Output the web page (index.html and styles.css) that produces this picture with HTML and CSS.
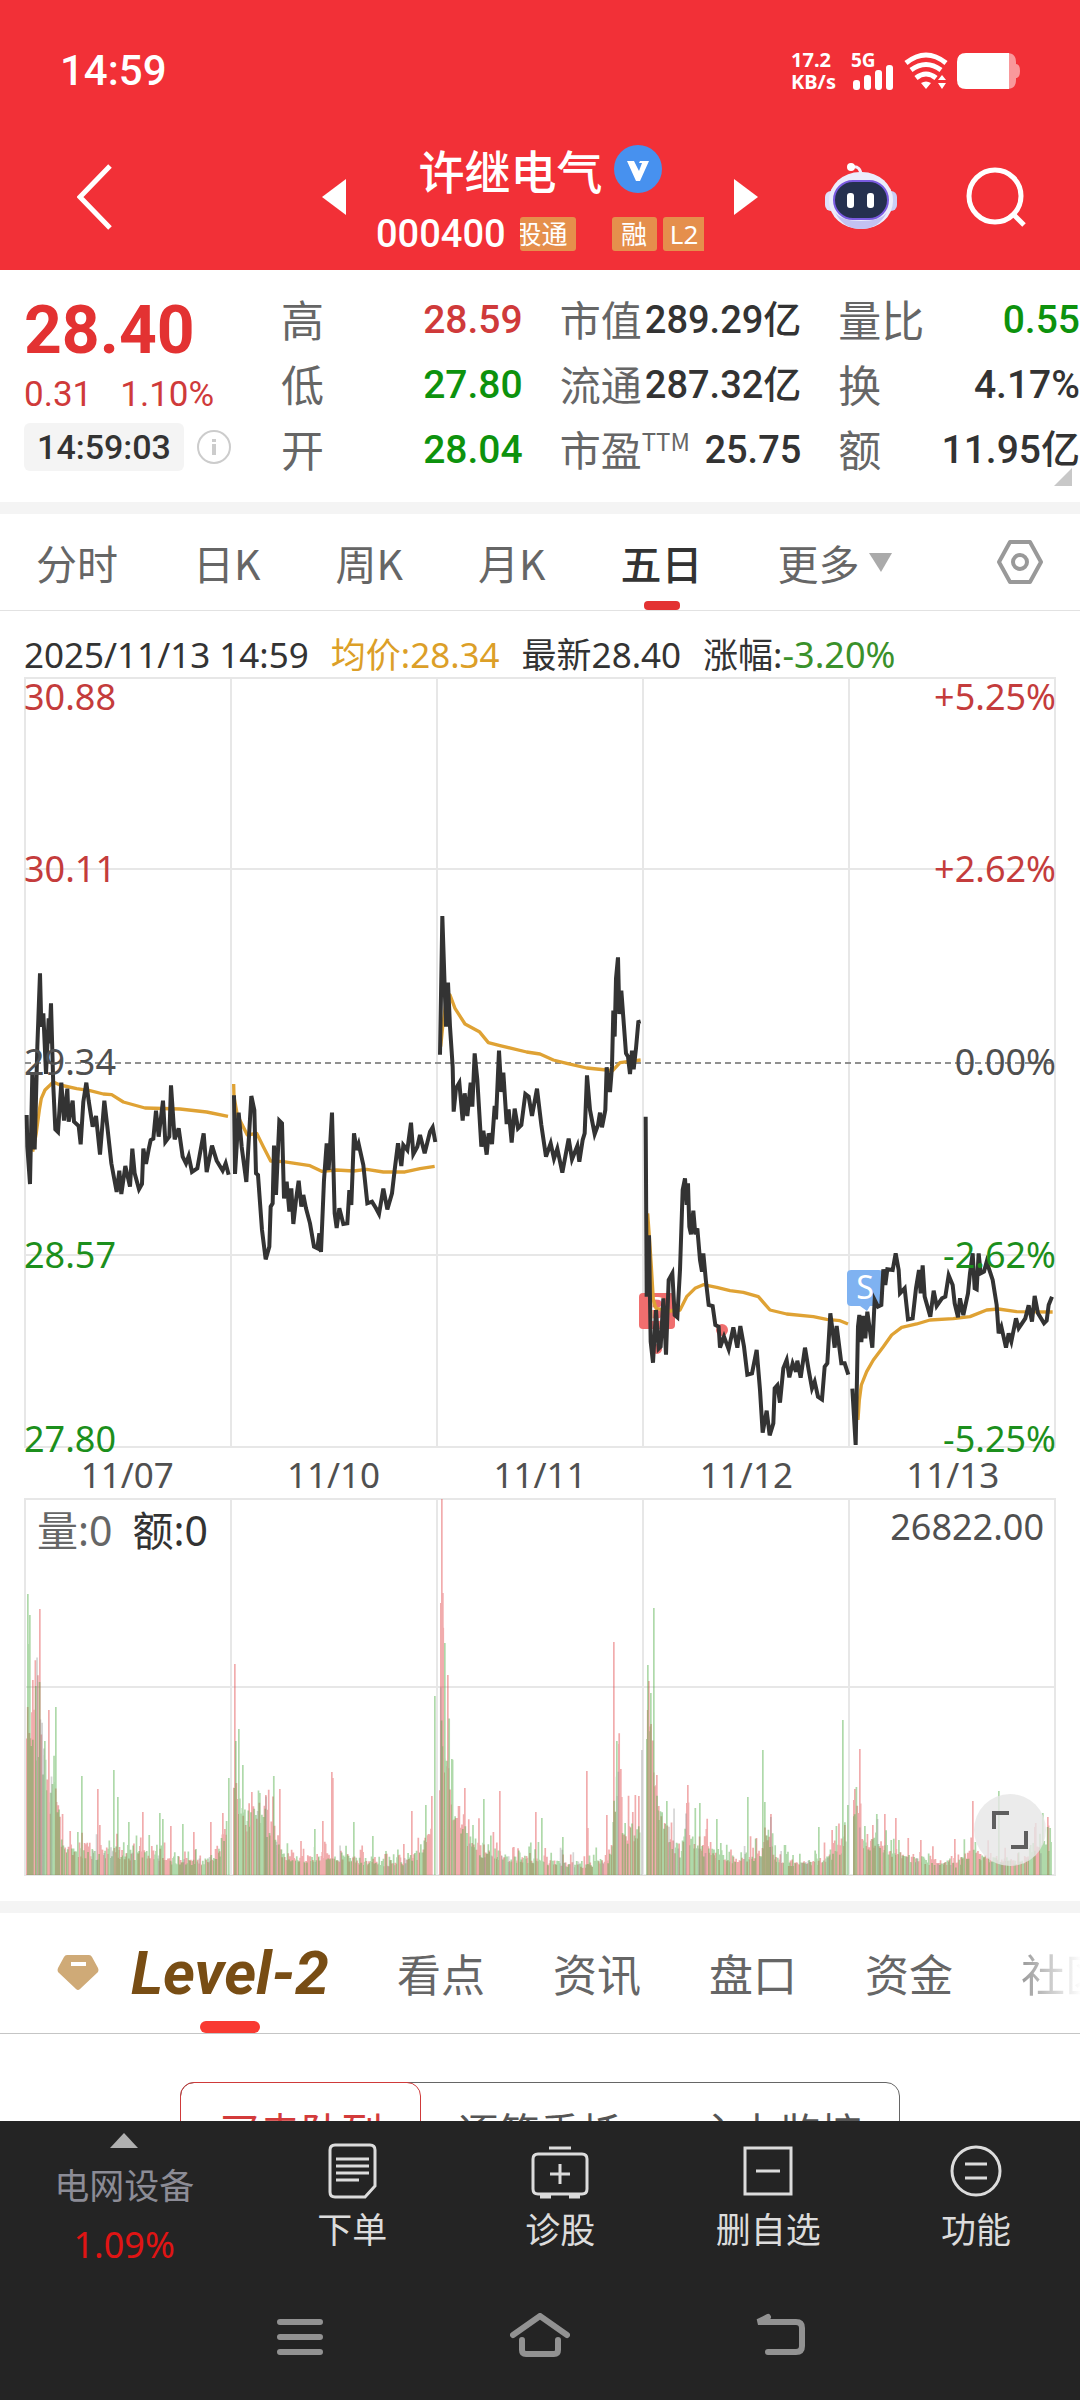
FILE: index.html
```html
<!DOCTYPE html>
<html lang="zh-CN">
<head>
<meta charset="utf-8">
<meta name="viewport" content="width=device-width, initial-scale=1">
<title>许继电气 000400</title>
<link rel="stylesheet" href="styles.css">
</head>
<body>
<div class="app">
  <header class="header">
    <div class="status">
      <span class="clock">14:59</span>
      <div class="status-icons">
        <span class="speed">17.2<br>KB/s</span>
        <div class="signal">
          <span>5G</span>
          <svg width="40" height="25" viewBox="0 0 40 25" fill="#fff"><rect x="0" y="15" width="7" height="10" rx="3"/><rect x="11" y="10" width="7" height="15" rx="3"/><rect x="22" y="5" width="7" height="20" rx="3"/><rect x="33" y="0" width="7" height="25" rx="3"/></svg>
        </div>
        <svg class="wifi" width="44" height="38" viewBox="0 0 44 38" fill="none" stroke="#fff" stroke-width="5"><path d="M2 11Q22-5 42 11M7 18Q22 7 37 18M12 26Q22 18 32 26"/><path d="M17 31q5-3 10 0l-5 6zM34 28l4-5 4 5zM34 31h8l-4 6z" fill="#fff" stroke="none"/></svg>
        <svg class="battery" width="63" height="36" viewBox="0 0 63 36"><path d="M50 0c7 0 9 4 9 9v2q4 0 4 7t-4 7v2c0 5-2 9-9 9z" fill="#f9989b"/><path d="M9 0h43v36H9q-9 0-9-9V9q0-9 9-9z" fill="#fff"/></svg>
      </div>
    </div>
    <nav class="titlebar">
      <div class="side">
        <button class="icon-btn" aria-label="返回"><svg width="36" height="66" viewBox="0 0 36 66" fill="none" stroke="#fff" stroke-width="5"><path d="M33 2L3 33l30 31"/></svg></button>
      </div>
      <div class="stock">
        <button class="icon-btn" aria-label="上一只"><svg width="24" height="36" viewBox="0 0 24 36" fill="#fff"><path d="M24 0v36L0 18z"/></svg></button>
        <div class="stock-name">
          <h1>许继电气<svg width="48" height="48" viewBox="0 0 48 48"><circle cx="24" cy="24" r="24" fill="#4791ef"/><path d="M13 16h7l5 10 3-8h-3l1-2h9l-9 20h-4z" fill="#fff"/></svg></h1>
          <div class="code-row">
            <span class="code">000400</span>
            <span class="tag tag-cut">股通</span>
            <span class="tag">融</span>
            <span class="tag tag-l2">L2</span>
          </div>
        </div>
        <button class="icon-btn" aria-label="下一只"><svg width="24" height="36" viewBox="0 0 24 36" fill="#fff"><path d="M0 0v36l24-18z"/></svg></button>
      </div>
      <div class="side side-right">
        <button class="icon-btn" aria-label="智能助手"><svg width="72" height="70" viewBox="0 0 72 70"><path d="M36 14c0-7-3-10-9-9" fill="none" stroke="#f3eefc" stroke-width="3"/><circle cx="26" cy="5" r="4" fill="#fff"/><rect x="0" y="29" width="14" height="20" rx="6" fill="#dfe0fa"/><rect x="58" y="29" width="14" height="20" rx="6" fill="#c9cdf5"/><rect x="4" y="10" width="64" height="57" rx="31" ry="28" fill="#ececfb"/><path d="M10 50q8 17 26 17t26-17q-6 9-26 9T10 50z" fill="#c3c2f2"/><rect x="9" y="19" width="54" height="38" rx="19" fill="#25304f" stroke="#7a5be0" stroke-width="2"/><rect x="22" y="31" width="7" height="15" rx="3" fill="#fff"/><rect x="42" y="31" width="7" height="15" rx="3" fill="#fff"/></svg></button>
        <button class="icon-btn" aria-label="搜索"><svg width="62" height="62" viewBox="0 0 62 62" fill="none" stroke="#fff" stroke-width="5"><circle cx="30" cy="30" r="26"/><path d="M48 48l11 11"/></svg></button>
      </div>
    </nav>
  </header>

  <main class="content">
    <section class="quote">
      <div class="quote-main">
        <strong class="price">28.40</strong>
        <div class="change"><span>0.31</span><span>1.10%</span></div>
        <div class="quote-time"><time>14:59:03</time><svg width="34" height="34" viewBox="0 0 34 34" fill="none" stroke="#ccc" stroke-width="2"><circle cx="17" cy="17" r="16"/><path d="M17 14v11M17 9v3" stroke-width="4"/></svg></div>
      </div>
      <dl class="stats">
        <div><dt>高</dt><dd class="up">28.59</dd></div>
        <div><dt>低</dt><dd class="down">27.80</dd></div>
        <div><dt>开</dt><dd class="down">28.04</dd></div>
      </dl>
      <dl class="stats stats-tight">
        <div><dt>市值</dt><dd>289.29亿</dd></div>
        <div><dt>流通</dt><dd>287.32亿</dd></div>
        <div><dt>市盈<sup>TTM</sup></dt><dd>25.75</dd></div>
      </dl>
      <dl class="stats">
        <div><dt>量比</dt><dd class="down">0.55</dd></div>
        <div><dt>换</dt><dd>4.17%</dd></div>
        <div><dt>额</dt><dd>11.95亿</dd></div>
      </dl>
      <svg class="corner" width="18" height="18" viewBox="0 0 18 18" fill="#c8c8c8"><path d="M18 0v18H0z"/></svg>
    </section>

    <nav class="periods">
      <a href="#">分时</a><a href="#">日K</a><a href="#">周K</a><a href="#">月K</a><a href="#" class="active">五日</a>
      <a href="#" class="more">更多<svg width="23" height="19" viewBox="0 0 23 19" fill="#aaa"><path d="M0 0h23L12 19z"/></svg></a>
      <button class="icon-btn settings" aria-label="设置"><svg width="48" height="46" viewBox="0 0 48 46" fill="none" stroke="#999" stroke-width="4"><path d="M14 3h20l11 20-11 20H14L3 23z" stroke-linejoin="round"/><circle cx="24" cy="23" r="7"/></svg></button>
    </nav>

    <section class="chart">
      <div class="legend">
        <span>2025/11/13 14:59</span><span class="avg">均价:28.34</span><span>最新28.40</span><span>涨幅:<b>-3.20%</b></span>
      </div>
      <div class="plot">
        <svg viewBox="24 677 1032 771" role="img" aria-label="五日走势">
          <path d="M25 678h1030v769H25zM25 869h1030M25 1255h1030M231 678v769M437 678v769M643 678v769M849 678v769" class="grid"/>
          <path d="M25 1063h1030" class="dash"/>
          <g class="buy"><rect x="639" y="1293" width="36" height="36" rx="4"/><circle cx="657" cy="1349" r="5"/><circle cx="722" cy="1330" r="6"/></g>
          <g class="sell"><path d="M851 1270h28q4 0 4 4v28q0 4-4 4h-9l-3 5-7-5h-9q-4 0-4-4v-28q0-4 4-4z"/><circle cx="868" cy="1327" r="4"/></g>
          <text x="657" y="1321" class="flag">B</text><text x="865" y="1299" class="flag">S</text>
          <g transform="translate(0 880) scale(.33333)">
            <polyline class="mean" points="98,815 108,765 118,690 124,655 135,630 160,606 180,615 230,626 270,632 310,642 335,644 370,666 435,684 540,687 620,696 684,709"/>
            <polyline class="mean" points="701,612 702,650 712,705 722,725 742,765 770,760 790,800 812,843 850,845 930,857 965,874 1010,870 1060,873 1100,868 1150,876 1215,876 1260,866 1304,859"/>
            <polyline class="line" points="80,705 82,800 90,912 97,580 104,808 112,500 120,280 124,440 130,400 138,582 146,415 148,490 153,370 160,620 166,748 174,756 184,608 192,722 202,626 206,725 218,662 222,725 236,738 242,793 250,665 259,608 266,662 278,740 288,708 300,824 313,662 322,740 334,850 350,936 358,872 364,942 376,858 390,920 397,806 404,880 417,928 426,912 430,806 438,852 446,808 452,780 460,776 468,692 476,770 489,662 496,786 508,770 513,616 524,778 536,745 548,830 558,850 566,828 576,876 592,865 600,820 611,760 620,876 636,797 650,842 668,872 677,850 686,884"/>
            <polyline class="line" points="702,646 705,882 716,698 725,800 739,906 754,648 763,690 768,880 774,885 786,1050 797,1138 808,1100 812,980 818,970 822,797 828,945 838,722 846,730 852,955 860,905 868,995 874,925 880,1032 888,960 896,902 904,980 910,945 918,985 930,1030 942,1100 952,1105 958,1060 963,1116 972,900 980,790 986,870 996,698 1004,1000 1010,1044 1018,985 1030,1032 1042,1030 1048,930 1054,975 1062,760 1070,810 1076,792 1090,855 1102,970 1116,965 1128,985 1137,1002 1150,926 1162,988 1176,940 1184,870 1194,790 1204,858 1210,795 1222,810 1233,728 1240,822 1252,800 1260,765 1274,820 1290,755 1298,742 1306,786"/>
          </g>
          <g transform="translate(420 880) scale(.33333)">
            <polyline class="mean" points="62,500 68,440 80,350 90,345 105,385 135,432 178,455 205,488 240,497 320,516 360,522 400,540 440,550 500,564 560,570 578,572 600,548 662,540"/>
            <polyline class="line" points="60,524 67,108 78,440 84,308 90,440 98,560 101,695 108,625 118,608 128,722 134,640 142,708 152,608 157,680 164,520 172,600 184,800 190,752 200,824 206,760 216,792 224,678 228,718 237,512 244,636 250,578 260,732 266,688 275,788 284,686 294,745 304,735 316,642 326,650 336,708 351,626 364,735 378,830 392,790 402,836 412,806 427,878 446,776 456,838 472,798 478,845 488,780 494,760 501,586 510,690 524,762 534,735 540,698 546,742 556,690 560,562 570,636 576,560 580,392 584,470 588,296 594,232 598,402 604,332 612,440 618,520 624,530 630,582 636,512 641,568 648,505 655,426 662,424"/>
          </g>
          <g transform="translate(620 1080) scale(.33333)">
            <polyline class="mean" points="83,400 88,470 94,560 100,660 108,685 150,693 180,690 200,650 225,625 250,614 290,622 330,632 370,637 415,650 450,690 500,702 580,710 620,718 660,722 684,732"/>
            <polyline class="mean" points="714,1020 718,960 724,915 740,875 760,840 790,800 815,765 845,742 890,732 930,720 1000,716 1050,710 1100,690 1135,687 1190,695 1298,696"/>
            <polyline class="line" points="77,110 80,650 87,466 92,785 99,848 108,690 116,806 122,800 130,655 138,824 146,600 157,580 164,705 172,712 180,570 188,330 195,295 200,375 204,310 208,440 213,463 220,392 226,463 232,445 240,540 246,575 250,520 258,605 266,675 278,678 286,735 296,740 300,803 312,770 326,808 340,742 352,803 361,738 372,800 382,884 396,880 410,810 420,930 428,1058 440,992 449,1066 460,1030 464,925 472,916 480,968 490,865 500,840 508,892 518,850 528,875 532,842 542,893 555,803 566,870 576,925 584,905 594,950 606,958 614,860 622,850 631,700 640,770 644,803 650,738 664,850 674,850 685,884"/>
            <polyline class="line" points="697,926 707,1095 714,740 718,705 724,786 730,708 736,775 742,695 757,803 764,660 774,680 784,675 790,568 796,615 802,568 818,570 827,520 836,570 840,640 854,625 864,718 878,715 888,625 897,570 902,640 908,556 914,650 931,710 941,632 950,678 966,655 976,650 986,586 998,615 1004,670 1014,712 1020,655 1030,705 1044,640 1050,580 1058,520 1064,625 1070,628 1076,520 1082,580 1092,575 1100,545 1118,600 1130,675 1136,760 1144,740 1158,803 1166,760 1174,785 1188,715 1196,745 1206,730 1216,715 1226,676 1236,725 1244,648 1254,700 1272,730 1280,722 1286,675 1296,650"/>
          </g>
        </svg>
        <div class="axis up r1"><span>30.88</span><span>+5.25%</span></div>
        <div class="axis up r2"><span>30.11</span><span>+2.62%</span></div>
        <div class="axis r3"><span>29.34</span><span>0.00%</span></div>
        <div class="axis down r4"><span>28.57</span><span>-2.62%</span></div>
        <div class="axis down r5"><span>27.80</span><span>-5.25%</span></div>
      </div>
      <div class="dates"><span>11/07</span><span>11/10</span><span>11/11</span><span>11/12</span><span>11/13</span></div>
      <div class="plot">
        <svg viewBox="-1 -1 1032 378" role="img" aria-label="成交量">
          <path d="M0 0h1030v376H0zM0 188h1030M206 0v376M412 0v376M618 0v376M824 0v376" class="grid"/>
          <path id="vol-up" fill="#e0484a" fill-opacity=".45"/>
          <path id="vol-down" fill="#4dab42" fill-opacity=".45"/>
          <path id="vol-flat" fill="#888" fill-opacity=".35"/>
        </svg>
        <div class="volume-info"><span>量:0</span><span class="dark">额:0</span><span class="max">26822.00</span></div>
        <button class="icon-btn expand" aria-label="全屏"><svg width="36" height="38" viewBox="0 0 36 38" fill="none" stroke="#5f5f5f" stroke-width="4"><path d="M2 18V2h15M34 20v16H19"/></svg></button>
      </div>
    </section>

    <nav class="sections">
      <svg class="gem" width="42" height="38" viewBox="0 0 42 38"><path d="M10 1h22q2 0 3 2l6 11q1 2 0 4L23 35q-2 2-4 0L1 18q-1-2 0-4L7 3q1-2 3-2z" fill="#cfaa77"/><path d="M14 10h15" stroke="#fff" stroke-width="4"/></svg>
      <a href="#" class="level">Level-2</a><a href="#">看点</a><a href="#">资讯</a><a href="#">盘口</a><a href="#">资金</a><a href="#">社区</a>
    </nav>
    <div class="segments">
      <button class="on">买卖队列</button><button>逐笔委托</button><button>主力监控</button>
    </div>
  </main>

  <footer class="footer">
    <nav class="toolbar">
      <a href="#" class="sector"><svg width="28" height="15" viewBox="0 0 28 15" fill="#b0b0b0"><path d="M14 0l14 15H0z"/></svg><span>电网设备</span><b>1.09%</b></a>
      <a href="#"><svg width="58" height="56" viewBox="0 0 58 56"><path d="M12 2h35q5 0 5 5v36L42 54H12q-5 0-5-5V7q0-5 5-5zM13 16h33M13 23h33M13 30h33M13 37h23"/></svg>下单</a>
      <a href="#"><svg width="58" height="56" viewBox="0 0 58 56"><path d="M7 11h44q5 0 5 5v30q0 5-5 5H7q-5 0-5-5V16q0-5 5-5zM18 5h22M29 21v20M19 31h20M9 54h11M38 54h11"/></svg>诊股</a>
      <a href="#"><svg width="58" height="56" viewBox="0 0 58 56"><path d="M6 5h46v46H6zM17 28h24"/></svg>删自选</a>
      <a href="#"><svg width="58" height="56" viewBox="0 0 58 56"><circle cx="29" cy="28" r="24"/><path d="M18 21h22M18 35h22"/></svg>功能</a>
    </nav>
    <nav class="system">
      <button class="icon-btn" aria-label="菜单"><svg width="60" height="46" viewBox="0 0 60 46"><path d="M10 9h40M10 24h40M10 39h40"/></svg></button>
      <button class="icon-btn" aria-label="主页"><svg width="60" height="46" viewBox="0 0 60 46"><path d="M3 22L30 3l27 19M12 27v10q0 4 4 4h28q4 0 4-4V27"/></svg></button>
      <button class="icon-btn" aria-label="后退"><svg width="60" height="46" viewBox="0 0 60 46"><path d="M18 4L8 9h38q6 0 6 6v18q0 6-6 6H18"/></svg></button>
    </nav>
  </footer>
</div>
<script src="chart.js"></script>
</body>
</html>
```
FILE: styles.css
```css
* { box-sizing: border-box; }
body {
  margin: 0;
  font-family: "Noto Sans", "Noto Sans CJK SC", sans-serif;
  color: #333;
  background: #fff;
}
a { color: inherit; text-decoration: none; }
svg { display: block; flex: none; }
h1, dl, dd { margin: 0; }
.icon-btn { padding: 0; border: 0; background: none; display: block; }
.up { color: #cf3a3a; }
.down { color: #0d920d; }

.app { display: flex; flex-direction: column; height: 100vh; }

/* header */
.header { flex: none; background: #f23037; color: #fff; padding-top: 42px; }
.status { display: flex; justify-content: space-between; align-items: center; height: 58px; padding: 0 60px; }
.clock { font: 500 42px/58px Roboto, sans-serif; }
.status-icons { display: flex; align-items: center; }
.speed { font: 700 20px/22px "Noto Sans", sans-serif; width: 60px; }
.signal { font: 700 19px/14px "Noto Sans", sans-serif; width: 53px; }
.signal svg { margin-left: 2px; margin-top: -2px; }
.wifi { margin-right: 9px; }
.titlebar { display: grid; grid-template-columns: 1fr auto 1fr; align-items: center; height: 170px; padding-top: 24px; }
.side { display: flex; align-items: center; padding-left: 77px; }
.side-right { justify-content: space-between; padding: 0 53px 0 67px; }
.stock { display: flex; align-items: center; gap: 30px; }
.stock-name { width: 328px; padding-top: 8px; }
.stock-name h1 { display: flex; justify-content: center; align-items: center; gap: 11px; font: 500 46px/66px "Noto Sans CJK SC", sans-serif; }
.code-row { display: flex; align-items: center; height: 64px; overflow: hidden; }
.code { font: 500 38px/64px Roboto, sans-serif; margin-right: 14px; }
.tag { width: 45px; height: 34px; margin-right: 6px; border-radius: 3px; background: #e58f4c; font-size: 26px; line-height: 34px; text-align: center; flex: none; }
.tag-cut { width: 56px; margin-right: 36px; padding-right: 8px; display: flex; justify-content: flex-end; overflow: hidden; white-space: nowrap; }
.tag-l2 { width: 43px; margin-right: 0; border-radius: 3px 0 0 3px; }

/* scrolling content */
.content { flex: 1; min-height: 0; overflow: hidden; }
.quote { position: relative; display: grid; grid-template-columns: 220px 1fr 1fr 1fr; column-gap: 37px; padding: 17px 0 20px 24px; border-bottom: 12px solid #f4f4f4; }
.price { display: block; font: 700 66px/88px Roboto, sans-serif; color: #e33232; }
.change { display: flex; gap: 28px; font: 400 35px/40px Roboto, sans-serif; color: #cf3a3a; }
.quote-time { display: flex; align-items: center; gap: 13px; margin-top: 8px; }
.quote-time time { width: 160px; border-radius: 6px; background: #f4f4f4; font: 500 34px/48px Roboto, sans-serif; text-align: center; }
.stats div { display: flex; justify-content: space-between; height: 65px; white-space: nowrap; }
.stats dt { color: #666; font: 400 43px/62px "Noto Sans CJK SC", sans-serif; }
.stats dd { font: 500 39px/66px Roboto, "Noto Sans CJK SC", sans-serif; }
.stats-tight dt { font-size: 41px; }
.stats-tight dd { font-size: 38px; }
.stats sup { font-size: 24px; line-height: 0; }
.corner { position: absolute; right: 8px; bottom: 16px; }

.periods { display: flex; align-items: center; gap: 75px; height: 97px; padding: 0 36px; border-bottom: 1px solid #e2e2e2; font: 400 41px/94px "Noto Sans CJK SC", sans-serif; color: #666; }
.active { position: relative; font-weight: 500; color: #333; }
.active::after { content: ""; position: absolute; left: 50%; bottom: -1px; width: 36px; height: 9px; margin-left: -18px; border-radius: 4px; background: #e33232; }
.more { display: flex; align-items: center; gap: 9px; }
.settings { margin-left: auto; }

.chart { padding: 21px 24px 25px; font-size: 35px; }
.legend { display: flex; gap: 22px; line-height: 45px; white-space: nowrap; }
.legend .avg { color: #dc9f28; }
.legend b { font-weight: 400; font-size: 36px; color: #3a912b; }
.plot { position: relative; }
.plot svg { width: 100%; height: auto; }
.plot .expand svg { width: 36px; }
.grid { fill: none; stroke: #e7e7e7; stroke-width: 2; }
.dash { stroke: #8f8f8f; stroke-width: 2; stroke-dasharray: 6 4; }
.line { fill: none; stroke: #333; stroke-width: 12; }
.mean { fill: none; stroke: #dfa234; stroke-width: 10; stroke-linejoin: round; }
.buy { fill: #f06e6e; }
.sell { fill: #7fb2f1; }
.flag { font-size: 32px; fill: #fff; text-anchor: middle; }
.axis { position: absolute; left: 0; right: 0; display: flex; justify-content: space-between; font-size: 36px; line-height: 40px; color: #505050; }
.axis.up { color: #c43c3c; }
.axis.down { color: #1c8f1c; }
.r1 { top: 0; }
.r2 { top: 22.3%; }
.r3 { top: 47.4%; }
.r4 { top: 72.4%; }
.r5 { bottom: -11px; }
.dates { display: grid; grid-template-columns: repeat(5, 1fr); height: 50px; line-height: 54px; text-align: center; color: #505050; }
.volume-info { position: absolute; top: 4px; left: 13px; right: 12px; display: flex; gap: 20px; font-size: 41px; line-height: 56px; color: #666; }
.volume-info .dark { color: #333; }
.volume-info .max { margin-left: auto; font-size: 36px; line-height: 50px; color: #505050; }
.expand { position: absolute; right: 10px; bottom: 10px; width: 72px; height: 72px; border-radius: 50%; background: rgba(230, 230, 230, .8); display: flex; align-items: center; justify-content: center; }

.sections { display: flex; align-items: center; gap: 68px; height: 133px; padding-left: 57px; overflow: hidden; border-top: 12px solid #f4f4f4; border-bottom: 1px solid #c5c5c5; font: 400 44px/120px "Noto Sans CJK SC", sans-serif; color: #666; white-space: nowrap; }
.gem { margin-right: -36px; }
.sections a:last-child { background: linear-gradient(90deg, #999, #fff 60px); -webkit-background-clip: text; background-clip: text; color: transparent; }
.level { position: relative; font: italic 700 61px/120px Roboto, sans-serif; color: #784d14; }
.level::after { content: ""; position: absolute; left: 50%; bottom: 0; width: 60px; height: 12px; margin-left: -30px; border-radius: 6px; background: #f93a32; }
.segments { display: flex; width: 66.7%; margin: 48px auto 0; border: 1px solid #666; border-radius: 14px; }
.segments button { flex: 1; padding: 0; border: 0; background: none; font: 400 41px/94px "Noto Sans CJK SC", sans-serif; color: #555; }
.segments .on { margin: -1px; border: 1px solid #cf3a3a; border-radius: 14px; color: #d33b3b; }

/* footer */
.footer { flex: none; background: #242424; color: #dcdcdc; }
.toolbar { display: grid; grid-template-columns: 23% repeat(4, 1fr); padding-top: 12px; height: 155px; }
.toolbar a { display: flex; flex-direction: column; align-items: center; font: 400 35px/50px "Noto Sans CJK SC", sans-serif; padding-top: 10px; gap: 4px; }
.toolbar svg { fill: none; stroke: #dcdcdc; stroke-width: 3; }
.toolbar .sector { padding: 0; gap: 11px; color: #8c8c96; }
.toolbar .sector svg { fill: #b0b0b0; stroke: none; }
.toolbar b { font: 400 36px/50px "Noto Sans", sans-serif; color: #e01414; }
.system { display: flex; justify-content: center; align-items: center; gap: 180px; height: 124px; padding-bottom: 4px; }
.system svg { fill: none; stroke: #929292; stroke-width: 6; stroke-linecap: round; }
```
FILE: chart.js
```js
// Per-minute volume for five sessions: a base envelope of [x, height] pairs plus
// single-minute peaks as [x, height, direction].
const sessions = [
  { base: [[1,170],[8,165],[16,160],[20,105],[26,75],[33,75],[36,32],[60,24],[90,26],[120,22],[150,16],[180,14],[195,28],[201,60]],
    peaks: [[2,281,"down"],[4,260,"down"],[3,231,"down"],[7,195,"up"],[10,189,"down"],[12,194,"up"],[14,266,"up"],[19,134,"down"],[23,165,"up"],[29,93,"down"],[30,168,"down"],[56,99,"down"],[72,86,"up"],[74,50,"up"],[88,105,"down"],[92,78,"down"],[103,53,"down"],[117,63,"up"],[134,62,"down"],[137,56,"down"],[145,49,"up"],[157,51,"down"],[168,43,"up"],[185,53,"up"],[197,62,"up"],[203,97,"down"]] },
  { base: [[208,110],[212,80],[220,68],[240,62],[248,48],[256,24],[280,18],[320,20],[345,14],[360,14],[380,16],[395,27],[406,50]],
    peaks: [[209,211,"up"],[210,134,"down"],[213,146,"down"],[217,110,"down"],[226,83,"up"],[234,82,"down"],[240,80,"up"],[254,86,"up"],[289,46,"down"],[297,54,"up"],[306,103,"up"],[307,97,"up"],[328,53,"down"],[347,39,"down"],[386,64,"up"],[400,70,"down"],[406,79,"up"],[409,179,"down"]] },
  { base: [[414,120],[420,140],[425,75],[440,44],[460,24],[490,18],[520,16],[560,10],[585,20],[590,105],[596,54],[610,42],[614,50]],
    peaks: [[415,272,"up"],[416,376,"up"],[417,282,"up"],[419,232,"down"],[422,200,"up"],[426,116,"down"],[439,87,"up"],[458,76,"down"],[474,84,"up"],[510,63,"up"],[516,57,"down"],[537,38,"down"],[561,104,"up"],[562,47,"up"],[581,60,"up"],[588,233,"up"],[591,134,"down"],[593,131,"up"],[595,106,"up"],[613,79,"up"],[616,125,"flat"]] },
  { base: [[621,200],[627,130],[632,66],[645,44],[655,24],[660,54],[670,32],[690,25],[710,16],[735,22],[740,48],[750,20],[770,12],[800,18],[820,38]],
    peaks: [[622,210,"down"],[623,194,"up"],[625,182,"down"],[628,267,"down"],[631,100,"up"],[641,74,"down"],[662,90,"up"],[661,72,"up"],[674,72,"down"],[691,56,"down"],[722,78,"down"],[737,125,"down"],[739,73,"down"],[745,58,"flat"],[793,48,"down"],[817,155,"down"],[819,50,"up"],[822,70,"down"]] },
  { base: [[828,75],[835,44],[850,36],[870,23],[900,17],[930,12],[945,25],[970,16],[1000,16],[1015,30],[1026,38]],
    peaks: [[828,75,"up"],[829,86,"up"],[834,126,"up"],[847,50,"up"],[859,61,"up"],[870,57,"up"],[895,35,"up"],[929,36,"up"],[947,74,"up"],[973,84,"down"],[1009,48,"up"],[1017,62,"down"],[1022,58,"up"]] }
];

let seed = 11;
function random() {
  seed = (seed * 16807) % 2147483647;
  return seed / 2147483647;
}

function level(base, x) {
  for (let i = 1; i < base.length; i++) {
    if (x <= base[i][0]) {
      const [x0, y0] = base[i - 1];
      const [x1, y1] = base[i];
      return y0 + (y1 - y0) * (x - x0) / (x1 - x0);
    }
  }
  return base[base.length - 1][1];
}

const paths = { up: "", down: "", flat: "" };
function bar(x, height, kind) {
  paths[kind] += `M${x.toFixed(2)} 376v${-height.toFixed(1)}h1.7v${height.toFixed(1)}z`;
}

for (const { base, peaks } of sessions) {
  const end = base[base.length - 1][0];
  for (let x = base[0][0]; x <= end; x += 0.85) {
    const r = random();
    const kind = r < 0.48 ? "up" : r < 0.95 ? "down" : "flat";
    bar(x, level(base, x) * (0.6 + random() * 0.45 + random() ** 6 * 1.1), kind);
  }
  for (const [x, height, kind] of peaks) bar(x, height, kind);
}
for (const kind in paths) document.getElementById("vol-" + kind).setAttribute("d", paths[kind]);
```
